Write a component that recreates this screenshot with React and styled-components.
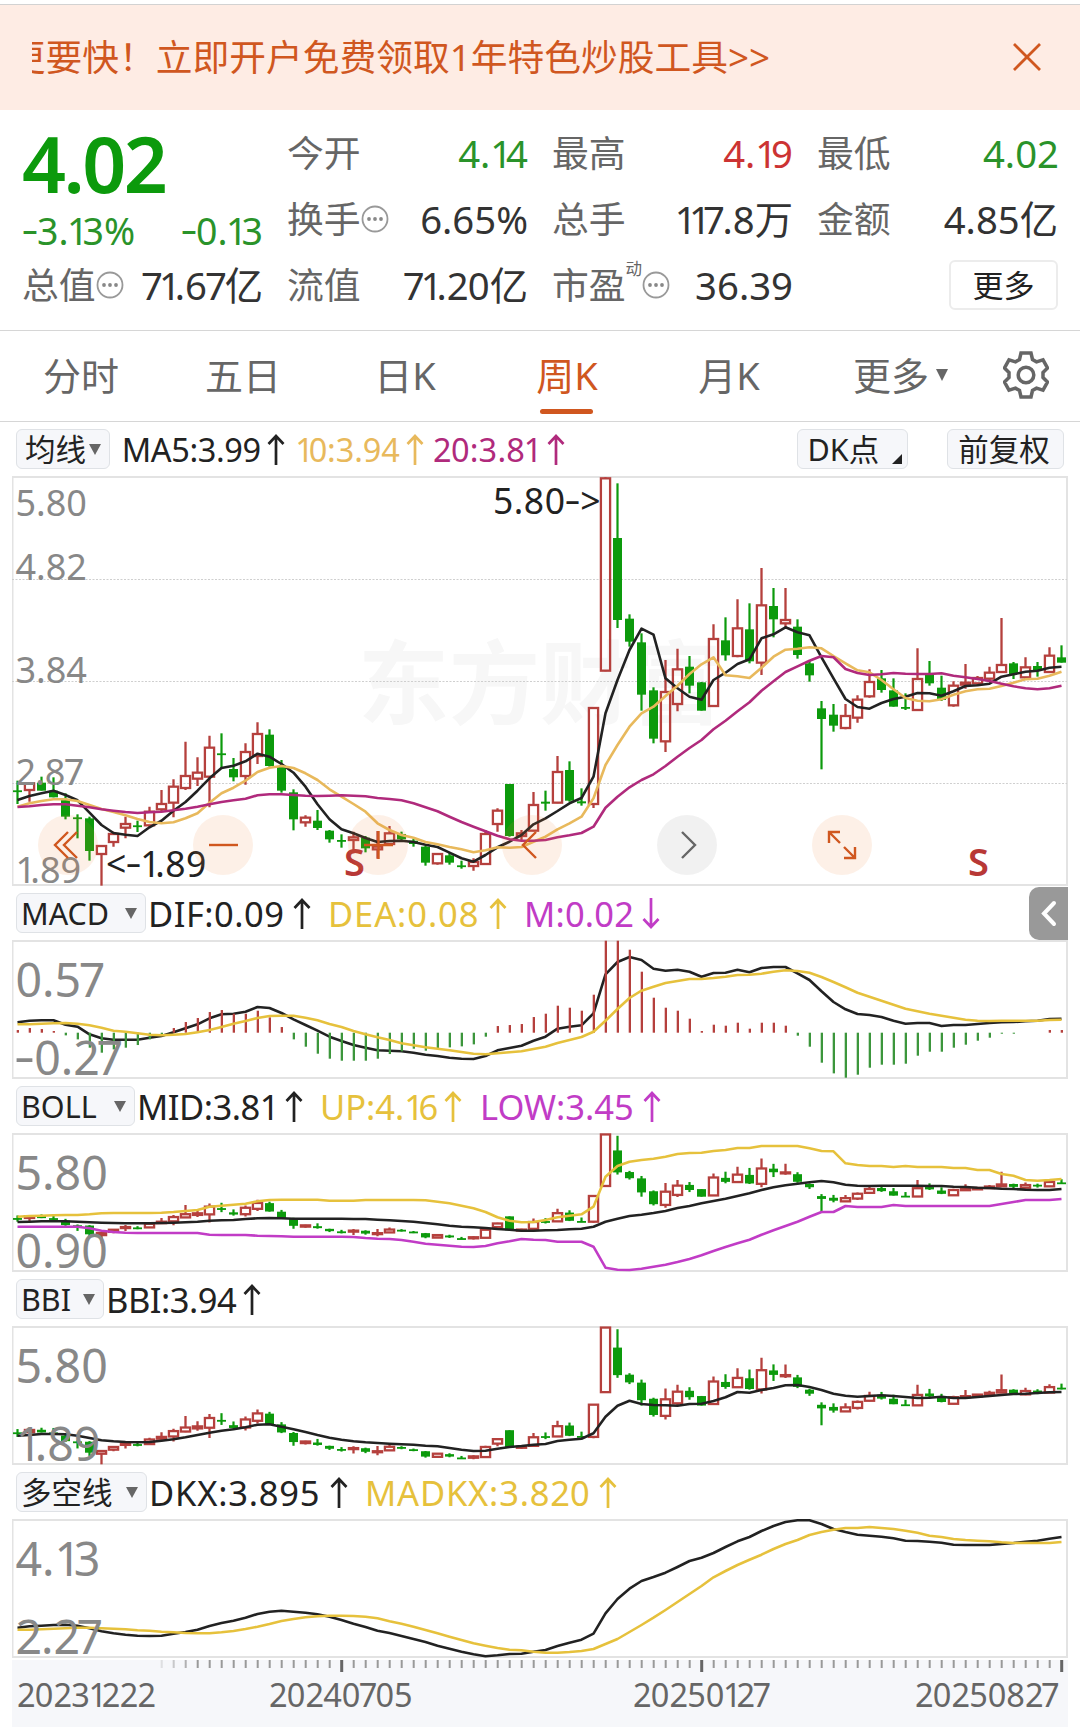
import React from "react";
import styled, { createGlobalStyle } from "styled-components";

const RED = "#b5403d";
const GREEN = "#0c9a0c";
const ORANGE = "#d0571f";
const BLACK = "#222";
const GOLD = "#e8b95c";
const YELLOW = "#e6c13c";
const MAGENTA = "#b02a7c";
const PURPLE = "#c13cc6";

const GlobalStyle = createGlobalStyle`
  * {
    box-sizing: border-box;
  }
  body {
    margin: 0;
    background: #fff;
    font-family: "Noto Sans", "Noto Sans CJK SC", sans-serif;
    color: #222;
  }
`;

/* ---------- data ---------- */

// [direction, high, body top, body bottom, low], thirds of a pixel on the main chart
const candles = [
  ["g", 932, 961, 963, 1002], ["r", 937, 940, 960, 995], ["g", 920, 938, 962, 962], ["g", 922, 962, 982, 982],
  ["g", 970, 990, 1040, 1048], ["g", 1033, 1042, 1045, 1105], ["g", 1040, 1045, 1143, 1172], ["r", 1128, 1128, 1152, 1247],
  ["r", 1085, 1092, 1116, 1130], ["r", 1040, 1062, 1073, 1105], ["g", 1052, 1066, 1068, 1086], ["r", 1010, 1025, 1066, 1070],
  ["r", 960, 1002, 1018, 1025], ["r", 928, 950, 998, 1042], ["r", 815, 918, 954, 960], ["r", 862, 908, 926, 948],
  ["r", 797, 833, 920, 1012], ["g", 790, 850, 853, 895], ["g", 864, 897, 922, 934], ["r", 820, 846, 918, 944],
  ["r", 757, 792, 858, 882], ["g", 778, 794, 888, 890], ["g", 870, 890, 962, 968], ["g", 958, 967, 1048, 1081],
  ["r", 1036, 1043, 1057, 1070], ["g", 1020, 1052, 1074, 1080], ["g", 1080, 1082, 1108, 1118], ["g", 1093, 1110, 1112, 1133],
  ["r", 1085, 1102, 1110, 1150], ["g", 1098, 1103, 1135, 1147], ["r", 1083, 1130, 1138, 1166], ["r", 1068, 1090, 1122, 1128],
  ["g", 1085, 1092, 1108, 1112], ["g", 1106, 1112, 1122, 1130], ["g", 1128, 1130, 1178, 1187], ["r", 1150, 1152, 1180, 1184],
  ["g", 1148, 1156, 1178, 1184], ["g", 1172, 1186, 1188, 1196], ["r", 1165, 1176, 1188, 1202], ["r", 1080, 1092, 1182, 1184],
  ["r", 1015, 1022, 1062, 1085], ["g", 942, 942, 1098, 1100], ["r", 1080, 1090, 1098, 1110], ["r", 966, 1005, 1082, 1084],
  ["g", 962, 995, 1001, 1022], ["r", 858, 906, 998, 1000], ["g", 874, 900, 992, 995], ["g", 955, 994, 1000, 1007],
  ["r", 712, 714, 1002, 1014], ["r", 22, 25, 602, 604], ["g", 40, 204, 450, 474], ["g", 433, 446, 515, 530],
  ["g", 490, 517, 674, 722], ["g", 652, 661, 806, 820], ["r", 570, 666, 814, 846], ["r", 536, 598, 702, 724],
  ["g", 558, 590, 647, 670], ["g", 636, 637, 722, 722], ["r", 463, 507, 708, 710], ["g", 442, 511, 556, 572],
  ["r", 388, 475, 558, 562], ["g", 400, 478, 574, 580], ["r", 294, 406, 578, 615], ["g", 354, 408, 448, 502],
  ["r", 354, 450, 460, 475], ["g", 448, 470, 555, 566], ["g", 572, 580, 616, 635], ["g", 693, 715, 747, 898],
  ["g", 702, 734, 767, 785], ["r", 702, 738, 774, 778], ["r", 676, 689, 743, 758], ["r", 598, 636, 679, 683],
  ["g", 600, 625, 660, 668], ["g", 625, 661, 710, 710], ["g", 670, 711, 715, 720], ["r", 535, 627, 720, 722],
  ["g", 573, 614, 640, 647], ["g", 617, 653, 690, 693], ["r", 634, 647, 706, 710], ["r", 582, 638, 644, 656],
  ["r", 618, 624, 640, 648], ["r", 590, 608, 626, 634], ["r", 444, 585, 606, 608], ["g", 576, 580, 612, 627],
  ["r", 562, 592, 622, 630], ["g", 576, 588, 602, 620], ["r", 532, 557, 606, 608], ["g", 526, 562, 578, 578],
];

const ma5 = [
  990, 978, 970, 962, 975, 991, 1028, 1065, 1089, 1094, 1098, 1072, 1052, 1022, 996, 962, 925, 894, 887, 874, 851, 860,
  882, 908, 950, 1003, 1048, 1078, 1090, 1104, 1116, 1113, 1112, 1116, 1124, 1131, 1148, 1165, 1175, 1155, 1132, 1115,
  1095, 1063, 1045, 1023, 1000, 984, 920, 730, 630, 540, 476, 494, 625, 655, 680, 689, 630, 608, 582, 568, 505, 493,
  472, 487, 496, 562, 625, 687, 711, 716, 699, 687, 680, 669, 670, 677, 664, 648, 646, 641, 620, 613, 605, 602, 593, 590,
];
const ma10 = [
  1010, 1000, 993, 988, 988, 993, 1005, 1017, 1026, 1036, 1047, 1056, 1060, 1057, 1045, 1030, 998, 970, 953, 932, 906,
  893, 888, 894, 910, 930, 958, 980, 1002, 1025, 1060, 1080, 1095, 1103, 1116, 1123, 1131, 1138, 1147, 1141, 1132, 1133,
  1131, 1115, 1100, 1078, 1060, 1040, 985, 885, 825, 770, 730, 710, 678, 647, 612, 583, 562, 616, 619, 624, 593, 560,
  539, 536, 532, 535, 558, 580, 601, 607, 630, 658, 684, 692, 694, 688, 674, 664, 658, 656, 648, 638, 628, 626, 617, 605,
];
const ma20 = [
  1011, 1009, 1005, 1003, 1003, 1007, 1012, 1018, 1022, 1026, 1029, 1027, 1025, 1021, 1016, 1010, 1003, 996, 991, 986,
  976, 973, 973, 975, 977, 978, 977, 976, 977, 979, 984, 987, 991, 1000, 1012, 1024, 1040, 1056, 1070, 1084, 1097, 1108,
  1112, 1112, 1110, 1102, 1096, 1089, 1070, 1013, 980, 952, 930, 913, 888, 860, 834, 810, 778, 752, 724, 697, 662, 634,
  606, 589, 572, 558, 562, 597, 609, 615, 613, 609, 611, 612, 612, 610, 617, 622, 627, 633, 641, 649, 655, 658, 655, 647,
];

const macd = [
  8, 14, 11, 5, -8, -20, -45, -60, -50, -45, -37, -20, -10, 14, 32, 44, 62, 68, 57, 57, 66, 46, 17, -20, -42, -63, -78,
  -84, -84, -84, -78, -64, -56, -48, -54, -47, -44, -41, -35, -12, 20, 23, 26, 47, 57, 81, 75, 66, 114, 276, 276, 249,
  183, 105, 75, 66, 42, 5, 24, 21, 30, 12, 30, 30, 21, -9, -42, -90, -122, -135, -126, -105, -96, -96, -93, -69, -57,
  -57, -45, -36, -24, -15, -3, -3, 0, 0, 8, 8,
];
const dif = [
  277, 272, 271, 271, 284, 290, 313, 325, 329, 329, 329, 323, 318, 307, 295, 283, 265, 253, 251, 245, 231, 234, 249, 268,
  285, 302, 320, 333, 345, 353, 361, 362, 364, 368, 374, 378, 383, 386, 387, 378, 361, 354, 347, 332, 320, 296, 290, 286,
  250, 133, 96, 81, 90, 116, 122, 119, 125, 140, 129, 128, 119, 127, 114, 111, 111, 130, 150, 184, 216, 238, 252, 255,
  261, 272, 281, 279, 279, 288, 285, 285, 282, 279, 277, 276, 274, 272, 267, 266,
];
const dea = [
  283, 283, 281, 280, 279, 281, 286, 293, 302, 305, 310, 314, 316, 314, 312, 307, 300, 291, 281, 273, 264, 258, 257, 257,
  263, 271, 282, 291, 303, 313, 322, 330, 340, 346, 352, 356, 361, 366, 371, 373, 370, 367, 364, 357, 350, 339, 330, 321,
  305, 272, 237, 204, 182, 170, 159, 153, 147, 147, 144, 140, 135, 134, 131, 125, 121, 123, 128, 141, 156, 172, 188, 200,
  212, 224, 236, 244, 251, 257, 263, 269, 272, 273, 272, 272, 272, 272, 270, 269,
];

const bollUp = [
  860, 858, 857, 856, 855, 855, 853, 850, 849, 849, 849, 849, 848, 846, 843, 840, 830, 827, 824, 821, 814, 810, 809, 809,
  809, 809, 812, 812, 812, 810, 810, 810, 810, 810, 811, 815, 820, 827, 835, 846, 862, 872, 877, 876, 870, 862, 857, 853,
  830, 740, 708, 695, 690, 686, 680, 672, 669, 668, 663, 660, 654, 654, 648, 648, 648, 648, 655, 663, 664, 700, 705, 708,
  708, 711, 708, 711, 711, 711, 714, 714, 720, 720, 732, 737, 750, 752, 750, 747,
];
const bollMid = [
  876, 875, 874, 874, 874, 875, 877, 878, 879, 880, 880, 880, 879, 878, 877, 875, 872, 871, 870, 867, 865, 864, 865, 866,
  866, 866, 866, 866, 867, 867, 869, 871, 873, 875, 879, 883, 887, 890, 892, 894, 897, 899, 902, 902, 901, 900, 898, 896,
  890, 875, 866, 858, 854, 849, 843, 834, 828, 820, 813, 806, 798, 790, 780, 772, 766, 761, 757, 753, 757, 764, 767, 768,
  767, 767, 767, 767, 768, 768, 770, 771, 773, 774, 776, 777, 779, 780, 780, 777,
];
const bollLow = [
  890, 890, 890, 890, 890, 890, 895, 902, 906, 908, 909, 909, 909, 909, 909, 909, 914, 915, 915, 915, 917, 918, 919, 920,
  920, 920, 920, 920, 921, 924, 926, 927, 930, 935, 941, 944, 947, 950, 951, 948, 940, 934, 927, 929, 930, 935, 935, 935,
  950, 1013, 1019, 1020, 1016, 1010, 1004, 996, 987, 976, 963, 951, 940, 929, 914, 901, 888, 875, 860, 846, 846, 828,
  831, 831, 831, 825, 828, 828, 828, 828, 828, 828, 828, 828, 822, 816, 810, 810, 810, 807,
];

const bbi = [
  347, 345, 342, 342, 343, 347, 354, 361, 364, 366, 367, 366, 362, 358, 352, 345, 338, 332, 328, 322, 314, 313, 320, 328,
  336, 345, 353, 359, 364, 367, 369, 371, 373, 374, 377, 379, 384, 389, 393, 392, 386, 381, 378, 374, 372, 363, 359, 356,
  340, 290, 257, 242, 252, 255, 256, 257, 252, 251, 243, 232, 216, 218, 210, 204, 196, 195, 201, 210, 221, 227, 230, 228,
  226, 228, 231, 234, 233, 230, 234, 234, 231, 228, 225, 222, 221, 219, 217, 216,
];

const dkx = [
  923, 919, 917, 915, 914, 917, 925, 934, 940, 944, 947, 948, 947, 941, 936, 929, 918, 909, 902, 893, 882, 875, 872, 875,
  878, 883, 890, 900, 911, 921, 932, 939, 948, 957, 966, 977, 986, 995, 1003, 1009, 1006, 1002, 1001, 995, 990, 978, 968,
  959, 941, 880, 837, 806, 783, 771, 758, 741, 723, 713, 699, 681, 664, 651, 633, 618, 606, 601, 601, 612, 627, 636, 644,
  647, 650, 655, 662, 663, 665, 668, 674, 675, 675, 675, 672, 669, 665, 662, 656, 651,
];
const madkx = [
  929, 929, 928, 926, 925, 923, 923, 925, 926, 928, 931, 932, 935, 937, 939, 940, 940, 937, 933, 927, 920, 912, 903, 897,
  892, 889, 887, 887, 888, 890, 895, 904, 911, 920, 930, 940, 950, 960, 970, 977, 984, 989, 991, 995, 998, 998, 996, 993,
  987, 972, 957, 936, 915, 893, 870, 846, 822, 798, 772, 753, 735, 719, 704, 687, 672, 660, 645, 636, 629, 624, 624, 621,
  624, 627, 632, 638, 647, 651, 657, 660, 662, 664, 667, 669, 669, 669, 669, 666,
];

/* ---------- layout ---------- */

const Page = styled.main`
  width: 1080px;
  height: 1727px;
  padding-top: 4px;
  overflow: hidden;
  background: #fff;
`;

const Banner = styled.div`
  display: flex;
  align-items: center;
  justify-content: space-between;
  height: 106px;
  padding: 0 38px 2px 32px;
  border-top: 1px solid #d2d2d2;
  background: #feece4;
  color: ${ORANGE};
`;

const Marquee = styled.div`
  display: flex;
  justify-content: flex-end;
  width: 738px;
  overflow: hidden;
  font-size: 36.75px;
  line-height: 50px;
  white-space: nowrap;
`;

const Quote = styled.section`
  display: grid;
  grid-template-columns: repeat(4, 241px);
  grid-template-rows: repeat(3, 66px);
  column-gap: 24px;
  height: 221px;
  padding: 10px 22px 0 22px;
  border-bottom: 1px solid #d6d6d6;
`;

const PriceBlock = styled.div`
  grid-row: span 2;
  color: ${GREEN};
`;

const Price = styled.div`
  height: 90px;
  font-size: 77px;
  font-weight: 600;
  line-height: 87px;
  letter-spacing: -2.5px;
`;

const Change = styled.div`
  display: flex;
  justify-content: space-between;
  font-size: 37.5px;
  line-height: 41px;
  color: #2a932a;
`;

const Stat = styled.div`
  display: flex;
  align-items: center;
  justify-content: space-between;
  line-height: 48px;
  white-space: nowrap;
`;

const StatLabel = styled.span`
  display: flex;
  align-items: center;
  font-size: 36.8px;
  color: #666;
`;

const Sup = styled.sup`
  align-self: flex-start;
  font-size: 16.5px;
  line-height: 16px;
`;

const StatValue = styled.span`
  font-size: 38.3px;
  color: ${({ $color }) => $color || "#333"};
`;

const MoreButton = styled.button`
  align-self: center;
  justify-self: end;
  width: 109px;
  height: 50px;
  padding: 0 0 2px;
  border: 2px solid #ececec;
  border-radius: 6px;
  background: #fff;
  color: #222;
  font: 31px/42px "Noto Sans CJK SC", sans-serif;
`;

const Tabs = styled.nav`
  display: grid;
  grid-template-columns: repeat(6, 162px) 108px;
  height: 91px;
  border-bottom: 1px solid #d6d6d6;
`;

const Tab = styled.div`
  position: relative;
  display: flex;
  align-items: center;
  justify-content: center;
  padding-bottom: 2px;
  font-size: 38px;
  line-height: 50px;
  color: ${({ $active }) => ($active ? ORANGE : "#666")};

  &::after {
    content: "";
    position: absolute;
    left: 54px;
    bottom: 7px;
    width: 53px;
    height: 5px;
    border-radius: 3px;
    background: ${({ $active }) => ($active ? ORANGE : "transparent")};
  }
`;

const TabArrow = styled.span`
  width: 0;
  margin: 0 -19px 0 7px;
  border: 6.5px solid transparent;
  border-top: 12px solid #666;
  border-bottom: 0;
`;

const Legend = styled.div`
  display: flex;
  align-items: center;
  height: 54px;
  padding: 0 16px;
  font-size: ${({ $size }) => $size || 34.5}px;
  line-height: 40px;
  white-space: nowrap;
`;

const Picker = styled.button`
  display: flex;
  align-items: center;
  justify-content: space-between;
  width: ${({ $width }) => $width}px;
  height: 40px;
  margin-left: ${({ $left }) => $left || 0}px;
  padding: 0 8px 0 ${({ $pad }) => $pad ?? 4}px;
  border: 1px solid #dfe2e6;
  border-radius: 6px;
  background: #f6f7fa;
  color: #222;
  font-family: inherit;
  font-size: 30.5px;
  line-height: 37px;
  white-space: nowrap;
`;

const Caret = styled.span`
  border: 6.5px solid transparent;
  border-top: 11px solid #666;
  border-bottom: 0;
`;

const Corner = styled.span`
  align-self: flex-end;
  margin: 0 -3px 4px 0;
  border: 5px solid #222;
  border-top-color: transparent;
  border-left-color: transparent;
`;

const Reading = styled.span`
  display: flex;
  align-items: center;
  justify-content: space-between;
  width: ${({ $width }) => $width}px;
  margin-left: ${({ $left }) => $left}px;
  padding-top: 1px;
  letter-spacing: ${({ $track }) => $track || 0}px;
  color: ${({ $color }) => $color};
`;

const Frame = styled.div`
  position: relative;
  z-index: 0;
  width: 1056px;
  height: ${({ $height }) => $height}px;
  margin-left: 12px;

  > svg {
    display: block;
  }
`;

const AxisLabel = styled.span`
  position: absolute;
  left: 3.5px;
  top: ${({ $base }) => $base}px;
  margin-top: -38.5px;
  font-size: ${({ $size }) => $size || 46.5}px;
  line-height: ${({ $size }) => 80 - ($size || 46.5) * 0.776}px;
  white-space: nowrap;
  color: #888;
`;

const Note = styled.span`
  position: absolute;
  left: ${({ $x }) => $x}px;
  top: ${({ $y }) => $y}px;
  font-size: 35.5px;
  line-height: 40px;
  letter-spacing: 0.5px;
  white-space: nowrap;
`;

const Signal = styled(Note)`
  font-size: 38px;
  font-weight: 600;
  color: #b83836;
`;

const Watermark = styled.div`
  position: absolute;
  left: 346px;
  top: 146px;
  font: 700 91px/110px "Noto Sans CJK SC", sans-serif;
  color: #f7f7f7;
  z-index: -1;
`;

const Controls = styled.div`
  position: absolute;
  left: 26px;
  top: 339px;
  display: flex;
  gap: 94.8px;
`;

const RoundButton = styled.button`
  width: 60px;
  height: 60px;
  padding: 0;
  border: 0;
  border-radius: 50%;
  background: ${({ $muted }) => ($muted ? "rgba(0, 0, 0, 0.055)" : "rgba(240, 130, 60, 0.12)")};
  color: ${({ $muted }) => ($muted ? "#666" : ORANGE)};

  svg {
    display: block;
  }
`;

const SideTab = styled.button`
  width: 39px;
  height: 53px;
  margin: 0 -4px 0 auto;
  padding: 0;
  border: 0;
  border-radius: 10px 0 0 10px;
  background: #999;

  svg {
    display: block;
  }
`;

const TimeAxis = styled.footer`
  width: 1056px;
  height: 67px;
  margin: 2px 0 0 12px;
  background: #f6f7fa;

  svg {
    display: block;
  }
`;

const Dates = styled.div`
  display: grid;
  grid-template-columns: 252px 364px 282px 152px;
  padding-left: 5px;
  font-size: 32.5px;
  line-height: 38px;
  color: #666;
  margin-top: 4px;
`;

/* ---------- text and icons ---------- */

const One = styled.span`
  margin: 0 -0.16em 0 -0.04em;

  &:first-child {
    margin-left: 0;
  }
`;

const Seven = styled.span`
  margin: 0 -0.06em 0 -0.05em;
`;

const Two = styled.span`
  margin-right: -0.025em;
`;

const Minus = styled.span`
  display: inline-block;
  margin: 0 0.04em;
  transform: translateY(-0.05em) scaleX(1.4);
`;

const glyphs = { 1: One, 2: Two, 7: Seven, "-": Minus };

// proportional figures: the font itself only has tabular ones
const Num = ({ children }) => (
  <span>
    {children.split(/([127-])/).map((part, i) => {
      const Glyph = glyphs[part];
      return Glyph ? <Glyph key={i}>{part}</Glyph> : part;
    })}
  </span>
);

const Arrow = ({ down }) => (
  <svg width="18" height="31" viewBox="0 0 18 31" fill="none" stroke="currentColor" strokeWidth="2.700">
    <path d={down ? "M9 0v29M1.500 21l7.500 8 7.500-8" : "M9 31V2M1.500 10l7.500-8 7.500 8"} />
  </svg>
);

const InfoDots = () => (
  <svg width="28" height="28" viewBox="0 0 28 28">
    <circle cx="14" cy="14" r="12.500" fill="none" stroke="#999" strokeWidth="1.800" />
    <circle cx="8" cy="14" r="1.900" fill="#888" />
    <circle cx="14" cy="14" r="1.900" fill="#888" />
    <circle cx="20" cy="14" r="1.900" fill="#888" />
  </svg>
);

const CloseIcon = () => (
  <svg width="30" height="30" viewBox="0 0 30 30" stroke="currentColor" strokeWidth="2.800">
    <path d="M2 2l26 26M28 2L2 28" />
  </svg>
);

const GearIcon = () => (
  <svg width="46" height="48" viewBox="0 0 46 48" fill="none" stroke="#666" strokeWidth="3.500">
    <path d="M18 2h10l1.500 6.500 4 2.300 6.500-2 4.500 8.200-4.500 4.500v5l4.500 4.500-4.500 8.200-6.500-2-4 2.300L28 46H18l-1.500-6.500-4-2.300-6.500 2L1.500 31 6 26.500v-5L1.500 17 6 8.800l6.500 2 4-2.300z" />
    <circle cx="23" cy="24" r="7.800" />
  </svg>
);

const controlIcons = [
  "M30 17L17 30l13 13M39 17L26 30l13 13",
  "M16 30h29",
  "M16 30h29M30.500 16v28",
  "M34 17L21 30l13 13",
  "M25 17l13 13-13 13",
  "M17 28V17h11M17 17l11 11M43 32v11H32M43 43L32 32",
];

/* ---------- chart parts ---------- */

const px = (i) => 17.5 + i * 12;

const Line = ({ data, y, color }) => (
  <polyline
    points={data.map((v, i) => `${px(i)},${y(v).toFixed(1)}`).join(" ")}
    fill="none"
    stroke={color}
    strokeWidth="2.600"
    strokeLinejoin="round"
  />
);

const Candles = ({ y }) =>
  candles.map(([dir, high, top, bottom, low], i) => {
    const x = px(i);
    const t = y(top);
    const h = y(bottom) - t;
    if (dir === "g") {
      return (
        <g key={i} fill={GREEN}>
          <rect x={x - 1.1} y={y(high)} width="2.200" height={y(low) - y(high)} />
          <rect x={x - 4.5} y={t} width="9" height={Math.max(h, 1.8)} />
        </g>
      );
    }
    return (
      <g key={i} fill="none" stroke={RED} strokeWidth="2.300">
        <path d={`M${x} ${y(high)}V${t}M${x} ${t + h}V${y(low)}`} />
        <rect x={x - 4.6} y={t} width="9.200" height={Math.max(h, 1)} />
      </g>
    );
  });

const Chart = ({ height, children, labels, size, bases, overlay }) => (
  <Frame $height={height}>
    <svg width="1056" height={height} viewBox={`12 0 1056 ${height}`}>
      <rect x="12.500" y="1" width="1054.500" height={height - 2} fill="none" stroke="#e3e3e3" strokeWidth="2" />
      {children}
    </svg>
    {labels.map((text, i) => (
      <AxisLabel key={text} $base={bases[i]} $size={size}>
        <Num>{text}</Num>
      </AxisLabel>
    ))}
    {overlay}
  </Frame>
);

const subBases = [56, 134];

const mainY = (v) => v / 3 - 6;
const macdY = (v) => v / 3 - 10;
const bollY = (v) => v / 3 - 203;
const bollCandleY = (v) => 1 + ((v - 20) / 1224) * (3.91 / 4.9) * 137;
const bbiY = (v) => v / 3 - 6;
const bbiCandleY = (v) => 1 + ((v - 20) / 1224) * 137;
const dkxY = (v) => v / 3 - 199;

const ZERO = 92.7;

export default function App() {
  return (
    <Page>
      <GlobalStyle />
      <Banner>
        <Marquee>更要快！立即开户免费领取1年特色炒股工具&gt;&gt;</Marquee>
        <CloseIcon />
      </Banner>

      <Quote>
        <PriceBlock>
          <Price>4.02</Price>
          <Change>
            <Num>-3.13%</Num>
            <Num>-0.13</Num>
          </Change>
        </PriceBlock>
        <Stat>
          <StatLabel>今开</StatLabel>
          <StatValue $color="#2a932a"><Num>4.14</Num></StatValue>
        </Stat>
        <Stat>
          <StatLabel>最高</StatLabel>
          <StatValue $color="#cc3333"><Num>4.19</Num></StatValue>
        </Stat>
        <Stat>
          <StatLabel>最低</StatLabel>
          <StatValue $color="#2a932a"><Num>4.02</Num></StatValue>
        </Stat>
        <Stat>
          <StatLabel>换手<InfoDots /></StatLabel>
          <StatValue><Num>6.65%</Num></StatValue>
        </Stat>
        <Stat>
          <StatLabel>总手</StatLabel>
          <StatValue><Num>117.8万</Num></StatValue>
        </Stat>
        <Stat>
          <StatLabel>金额</StatLabel>
          <StatValue><Num>4.85亿</Num></StatValue>
        </Stat>
        <Stat>
          <StatLabel>总值<InfoDots /></StatLabel>
          <StatValue><Num>71.67亿</Num></StatValue>
        </Stat>
        <Stat>
          <StatLabel>流值</StatLabel>
          <StatValue><Num>71.20亿</Num></StatValue>
        </Stat>
        <Stat>
          <StatLabel>市盈<Sup>动</Sup><InfoDots /></StatLabel>
          <StatValue><Num>36.39</Num></StatValue>
        </Stat>
        <MoreButton>更多</MoreButton>
      </Quote>

      <Tabs>
        <Tab>分时</Tab>
        <Tab>五日</Tab>
        <Tab>日K</Tab>
        <Tab $active>周K</Tab>
        <Tab>月K</Tab>
        <Tab>更多<TabArrow /></Tab>
        <Tab><GearIcon /></Tab>
      </Tabs>

      <Legend $size={32.5}>
        <Picker $width={94} $pad={8}>均线<Caret /></Picker>
        <Reading $width={164} $left={12} $track={-0.4} $color={BLACK}><Num>MA5:3.99</Num><Arrow /></Reading>
        <Reading $width={129} $left={10} $track={-0.1} $color={GOLD}><Num>10:3.94</Num><Arrow /></Reading>
        <Reading $width={132} $left={9} $track={0.2} $color={MAGENTA}><Num>20:3.81</Num><Arrow /></Reading>
        <Picker $width={112} $left={232} $pad={10}>DK点<Corner /></Picker>
        <Picker $width={117} $left={39} $pad={10}>前复权</Picker>
      </Legend>
      <Chart
        height={410}
        size={36}
        labels={["5.80", "4.82", "3.84", "2.87", "1.89"]}
        bases={[39, 103, 206, 308, 406]}
        overlay={
          <>
            <Note $x={94} $y={367}><Num>{"<-1.89"}</Num></Note>
            <Note $x={481} $y={4}><Num>{"5.80->"}</Num></Note>
            <Signal $x={332} $y={365}>S</Signal>
            <Signal $x={956} $y={365}>S</Signal>
            <Watermark>东方财富</Watermark>
            <Controls>
              {controlIcons.map((d, i) => (
                <RoundButton key={d} $muted={i === 4}>
                  <svg width="60" height="60" viewBox="0 0 60 60" fill="none" stroke="currentColor" strokeWidth="2.400">
                    <path d={d} />
                  </svg>
                </RoundButton>
              ))}
            </Controls>
          </>
        }
      >
        {[103.5, 205.5, 307.5].map((y) => (
          <path key={y} d={`M12 ${y}H1067`} stroke="#cfcfcf" strokeDasharray="2 1.500" />
        ))}
        <Candles y={mainY} />
        <Line data={ma5} y={mainY} color={BLACK} />
        <Line data={ma10} y={mainY} color={GOLD} />
        <Line data={ma20} y={mainY} color={MAGENTA} />
      </Chart>

      <Legend>
        <Picker $width={130}>MACD<Caret /></Picker>
        <Reading $width={163} $left={2} $track={0.5} $color={BLACK}><Num>DIF:0.09</Num><Arrow /></Reading>
        <Reading $width={179} $left={17} $track={0.9} $color={YELLOW}><Num>DEA:0.08</Num><Arrow /></Reading>
        <Reading $width={136} $left={17} $track={0.2} $color={PURPLE}><Num>M:0.02</Num><Arrow down /></Reading>
        <SideTab>
          <svg width="39" height="53" viewBox="0 0 39 53" fill="none" stroke="#fff" strokeWidth="4" strokeLinecap="round">
            <path d="M25 16L15 26.500 25 37" />
          </svg>
        </SideTab>
      </Legend>
      <Chart height={139} labels={["0.57", "-0.27"]} bases={subBases}>
        <Line data={dif} y={macdY} color={BLACK} />
        {macd.map((v, i) => (
          <rect
            key={i}
            x={px(i) - 0.8}
            y={v > 0 ? ZERO - v / 3 : ZERO}
            width="2.300"
            height={Math.abs(v) / 3}
            fill={v > 0 ? RED : "#3c963c"}
          />
        ))}
        <Line data={dea} y={macdY} color={YELLOW} />
      </Chart>

      <Legend>
        <Picker $width={119}>BOLL<Caret /></Picker>
        <Reading $width={166} $left={2} $track={-0.5} $color={BLACK}><Num>MID:3.81</Num><Arrow /></Reading>
        <Reading $width={142} $left={17} $color={YELLOW}><Num>UP:4.16</Num><Arrow /></Reading>
        <Reading $width={181} $left={18} $color={PURPLE}><Num>LOW:3.45</Num><Arrow /></Reading>
      </Legend>
      <Chart height={139} labels={["5.80", "0.90"]} bases={subBases}>
        <Candles y={bollCandleY} />
        <Line data={bollMid} y={bollY} color={BLACK} />
        <Line data={bollUp} y={bollY} color={YELLOW} />
        <Line data={bollLow} y={bollY} color={PURPLE} />
      </Chart>

      <Legend>
        <Picker $width={88}>BBI<Caret /></Picker>
        <Reading $width={155} $left={2} $track={-0.5} $color={BLACK}><Num>BBI:3.94</Num><Arrow /></Reading>
      </Legend>
      <Chart height={139} labels={["5.80", "1.89"]} bases={subBases}>
        <Candles y={bbiCandleY} />
        <Line data={bbi} y={bbiY} color={BLACK} />
      </Chart>

      <Legend>
        <Picker $width={131}>多空线<Caret /></Picker>
        <Reading $width={199} $left={2} $track={0.8} $color={BLACK}><Num>DKX:3.895</Num><Arrow /></Reading>
        <Reading $width={252} $left={17} $track={0.8} $color={YELLOW}><Num>MADKX:3.820</Num><Arrow /></Reading>
      </Legend>
      <Chart height={139} labels={["4.13", "2.27"]} bases={subBases}>
        <Line data={dkx} y={dkxY} color={BLACK} />
        <Line data={madkx} y={dkxY} color={YELLOW} />
      </Chart>

      <TimeAxis>
        <svg width="1056" height="12" viewBox="12 0 1056 12">
          {candles.slice(12).map((_, n) => {
            const i = n + 12;
            const major = i % 30 === 27;
            return (
              <rect
                key={i}
                x={px(i) - (major ? 1.3 : 0.8)}
                width={major ? 3 : 2}
                height={major ? 12 : 8}
                fill={major ? "#666" : "#999"}
                opacity={Math.min(1, (n + 1) / 4)}
              />
            );
          })}
        </svg>
        <Dates>
          <Num>20231222</Num>
          <Num>20240705</Num>
          <Num>20250127</Num>
          <Num>20250827</Num>
        </Dates>
      </TimeAxis>
    </Page>
  );
}
